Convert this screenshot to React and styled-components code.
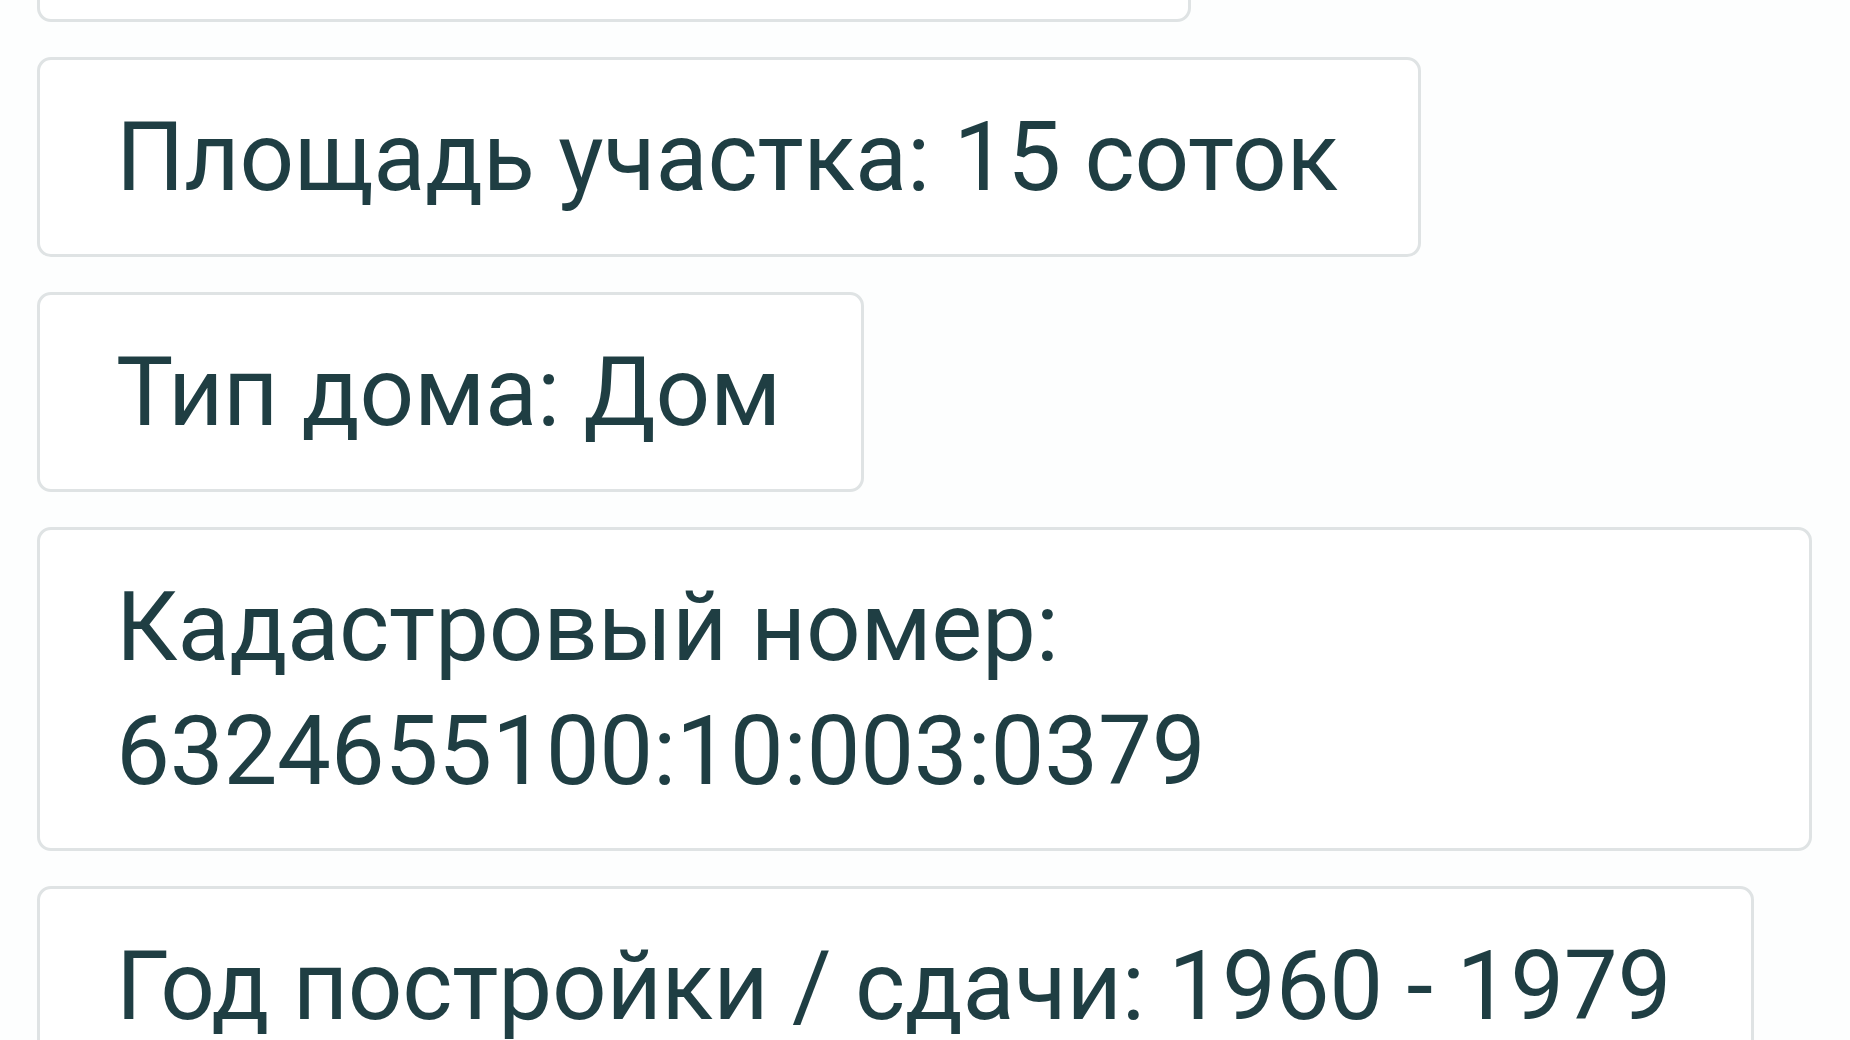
import React from "react";
import styled, { createGlobalStyle } from "styled-components";

const GlobalStyle = createGlobalStyle`
  html, body {
    margin: 0;
    padding: 0;
    background: #fdfefe;
    height: 1040px;
    overflow: hidden;
  }
  body {
    font-family: Roboto, "Noto Sans", sans-serif;
  }
`;

const items = [
  "Площадь участка: 15 соток",
  "Тип дома: Дом",
  "Кадастровый номер: 6324655100:10:003:0379",
  "Год постройки / сдачи: 1960 - 1979",
];

const App = () => {
  return (
    <>
      <GlobalStyle />
      <Page>
        {/* карточка выше, видна только нижняя кромка */}
        <Chip $cut />
        {items.map((text) => (
          <Chip key={text}>{text}</Chip>
        ))}
      </Page>
    </>
  );
};

export default App;

const Page = styled.div`
  display: flex;
  flex-direction: column;
  align-items: flex-start;
  gap: 35px;
  padding: 0 38px 0 37px;
  margin-top: -178px;
`;

const Chip = styled.div`
  box-sizing: border-box;
  max-width: 100%;
  width: ${(props) => (props.$cut ? "1154px" : "auto")};
  height: ${(props) => (props.$cut ? "200px" : "auto")};
  padding: 35px 80px 35px 76px;
  border: 3px solid #dfe3e4;
  border-radius: 14px;
  background: #ffffff;
  color: #1f3e43;
  font-size: 96px;
  line-height: 124px;
  font-weight: 400;
  letter-spacing: -0.25px;
`;
